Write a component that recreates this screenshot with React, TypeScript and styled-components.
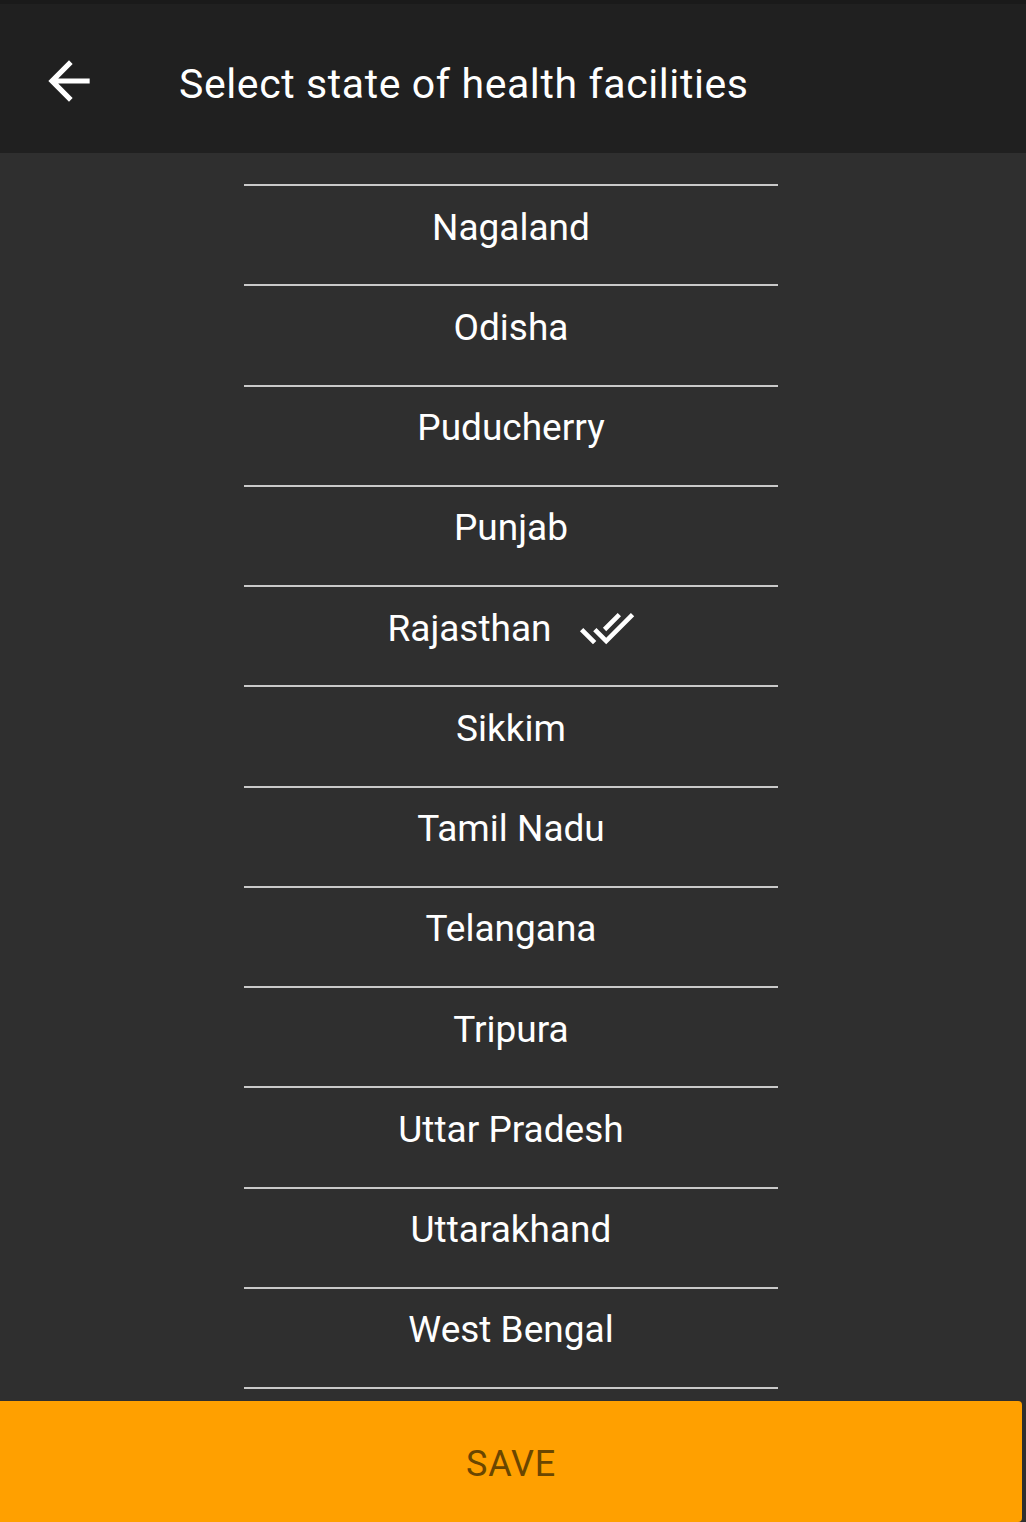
import React from "react";
import styled, { createGlobalStyle } from "styled-components";

const Global = createGlobalStyle`
  html, body { margin: 0; padding: 0; background: #2f2f2f; }
  body { font-family: Roboto, "Noto Sans", sans-serif; }
  * { box-sizing: border-box; }
`;

const Screen = styled.div`
  width: 1026px;
  height: 1522px;
  display: flex;
  flex-direction: column;
  background: #2f2f2f;
  overflow: hidden;
`;

const StatusStrip = styled.div`
  height: 4px;
  background: #1a1a1a;
  flex: none;
`;

const Toolbar = styled.header`
  height: 149px;
  flex: none;
  background: #202020;
  display: flex;
  align-items: center;
  padding-left: 38px;
`;

const BackButton = styled.button`
  width: 62px;
  height: 62px;
  padding: 0;
  border: none;
  background: none;
  color: #fff;
  display: flex;
  margin-top: 4px;
`;

const Title = styled.h1`
  margin: 10px 0 0 79px;
  font-size: 41px;
  font-weight: 400;
  color: #fff;
  letter-spacing: 0.6px;
`;

const ListArea = styled.div`
  flex: 1;
  min-height: 0;
  overflow: hidden;
  display: flex;
  justify-content: center;
  align-items: flex-start;
  padding-top: 31px;
  padding-right: 4px;
`;

const List = styled.ul`
  list-style: none;
  margin: 0;
  padding: 0;
  width: 534px;
  flex: none;
  border-bottom: 2px solid #c9c9c9;
`;

const Row = styled.li`
  height: 100.25px;
  border-top: 2px solid #c9c9c9;
  display: flex;
  align-items: center;
  justify-content: center;
  gap: 27px;
  color: #fff;
  font-size: 37px;
  padding-bottom: 16px;
`;

const Check = styled.svg`
  width: 56px;
  height: 56px;
  fill: #fff;
`;

const SaveButton = styled.button`
  flex: none;
  height: 121px;
  width: 1022px;
  border: none;
  border-radius: 0 4px 4px 0;
  background: #ffa000;
  color: #6a4600;
  font-family: Roboto, "Noto Sans", sans-serif;
  font-size: 36px;
  padding: 4px 0 0 0;
  letter-spacing: 0.8px;
`;

const states = [
  "Nagaland",
  "Odisha",
  "Puducherry",
  "Punjab",
  "Rajasthan",
  "Sikkim",
  "Tamil Nadu",
  "Telangana",
  "Tripura",
  "Uttar Pradesh",
  "Uttarakhand",
  "West Bengal",
];

export default function App() {
  return (
    <>
      <Global />
      <Screen>
        <StatusStrip />
        <Toolbar>
          <BackButton aria-label="Back">
            <svg viewBox="0 0 24 24" width="62" height="62" fill="#fff">
              <path d="M20 11H7.83l5.59-5.59L12 4l-8 8 8 8 1.41-1.41L7.83 13H20v-2z" />
            </svg>
          </BackButton>
          <Title>Select state of health facilities</Title>
        </Toolbar>
        <ListArea>
          <List>
            {states.map((s) => (
              <Row key={s}>
                <span>{s}</span>
                {s === "Rajasthan" && (
                  <Check viewBox="0 0 24 24">
                    <path d="M18 7l-1.41-1.41-6.34 6.34 1.41 1.41L18 7zm4.24-1.41L11.66 16.17 7.48 12l-1.41 1.41L11.66 19l12-12-1.42-1.41zM.41 13.41L6 19l1.41-1.41L1.83 12 .41 13.41z" />
                  </Check>
                )}
              </Row>
            ))}
          </List>
        </ListArea>
        <SaveButton>SAVE</SaveButton>
      </Screen>
    </>
  );
}
